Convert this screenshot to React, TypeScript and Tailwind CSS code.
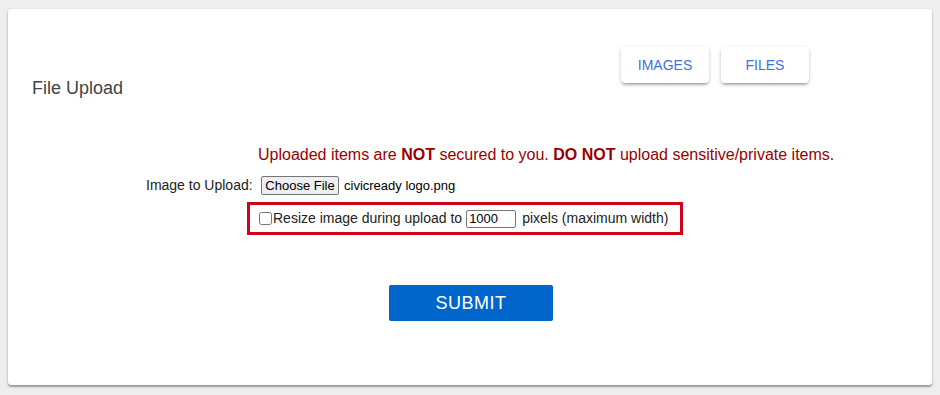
import * as React from "react";

const font = { fontFamily: '"Liberation Sans", Arial, sans-serif' };

export default function App() {
  const [resize, setResize] = React.useState(false);
  const [width, setWidth] = React.useState("1000");

  return (
    <div className="min-h-screen bg-[#eeeeee] pt-[9px] pl-2 pb-[9px]" style={font}>
      <div className="h-[376px] w-[924px] rounded-[3px] bg-white shadow-[0_2px_2px_rgba(0,0,0,0.35),0_0_2px_rgba(0,0,0,0.12)]">
        <div className="flex items-start pt-[38px] pl-6">
          <h1 className="mt-[29px] w-[589px] text-[18px] leading-6 text-[#444444]">File Upload</h1>
          <div className="flex gap-3">
            <TabButton label="IMAGES" />
            <TabButton label="FILES" />
          </div>
        </div>

        <p className="mt-[45px] pl-[250px] text-[16px] leading-5 text-[#990000]">
          Uploaded items are <b>NOT</b> secured to you. <b>DO NOT</b> upload sensitive/private items.
        </p>

        <div className="mt-[11px] flex h-[19px] items-center pl-[138px] text-[14px] text-[#222222]">
          <span className="w-[115px]">Image to Upload:</span>
          <button
            type="button"
            className="h-[19px] w-[78px] rounded-[2px] border border-[#767676] bg-[#efefef] text-[13px] leading-none text-black"
          >
            Choose File
          </button>
          <span className="ml-[5px] text-[13px] text-black">civicready logo.png</span>
        </div>

        <div className="mt-[7px] ml-[239px] flex h-[33px] w-[436px] items-center border-[3px] border-[#d0021b] pl-[9px] text-[14px] text-[#222222]">
          <input
            type="checkbox"
            checked={resize}
            onChange={(event) => setResize(event.target.checked)}
            className="m-0 h-[13px] w-[13px]"
          />
          <span className="ml-px">Resize image during upload to</span>
          <input
            value={width}
            onChange={(event) => setWidth(event.target.value)}
            className="ml-[4px] h-[18px] w-[50px] rounded-[2px] border border-[#767676] px-[2px] text-[13px] leading-none text-black"
          />
          <span className="ml-[6px]">pixels (maximum width)</span>
        </div>

        <button
          type="button"
          className="mt-[50px] ml-[381px] h-9 w-[164px] rounded-[2px] bg-[#0066cc] text-[18px] tracking-[0.5px] text-white"
        >
          SUBMIT
        </button>
      </div>
    </div>
  );
}

function TabButton({ label }: { label: string }) {
  return (
    <button
      type="button"
      className="h-9 w-[88px] rounded-[4px] bg-white text-[14px] text-[#3f6fdc] shadow-[0_3px_3px_-2px_rgba(0,0,0,0.25),0_2px_3px_rgba(0,0,0,0.14),0_1px_5px_rgba(0,0,0,0.1)]"
    >
      {label}
    </button>
  );
}
